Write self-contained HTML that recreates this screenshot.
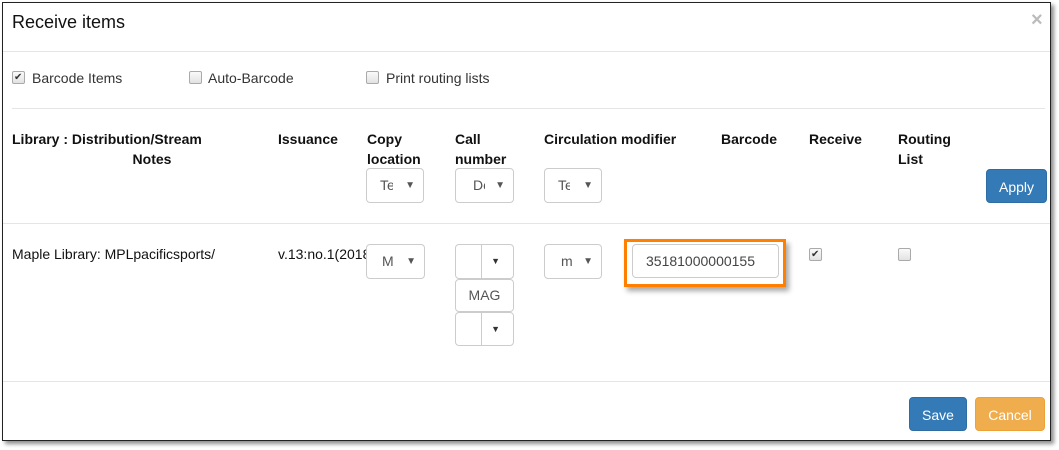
<!DOCTYPE html>
<html><head><style>
*{box-sizing:border-box;margin:0;padding:0}
body{width:1059px;height:450px;background:#fff;font-family:"Liberation Sans",Arial,sans-serif;font-size:14px;color:#333;position:relative;overflow:hidden}
.a{position:absolute}
#frame{left:2px;top:2px;width:1049px;height:439px;border:1px solid #222;box-shadow:3px 3px 4px rgba(0,0,0,.45);background:#fff}
.hr{position:absolute;height:1px;background:#e5e5e5}
.b{font-weight:bold;color:#111;line-height:20px}
.cb{position:absolute;width:13px;height:13px;border:1px solid #aaa;border-radius:2px;background:linear-gradient(#fafafa,#e2e2e2)}
.sel{position:absolute;border:1px solid #ccc;border-radius:4px;height:35px;background:#fff;color:#555;line-height:33px;font-size:14px}
.sel .t{position:absolute;left:13px;overflow:hidden;white-space:nowrap}
.sel .ar{position:absolute;right:8px;top:0;font-size:10px;color:#555}
.btn{position:absolute;border-radius:4px;color:#fff;text-align:center;font-size:14px}
.ck{position:absolute;font-size:10px;color:#333;line-height:10px}
</style></head><body>
<div id="frame" class="a"></div>
<div class="a" style="left:12px;top:12px;font-size:18px;color:#111">Receive items</div>
<div class="a" style="left:1031px;top:9px;font-size:20px;color:#bbb;font-weight:bold">×</div>
<div class="hr" style="left:3px;top:51px;width:1047px"></div>

<div class="cb" style="left:12px;top:71px"></div><div class="ck" style="left:14px;top:73px">✔</div>
<div class="a" style="left:32px;top:70px;color:#333">Barcode Items</div>
<div class="cb" style="left:189px;top:71px"></div>
<div class="a" style="left:208px;top:70px">Auto-Barcode</div>
<div class="cb" style="left:366px;top:71px"></div>
<div class="a" style="left:386px;top:70px">Print routing lists</div>
<div class="hr" style="left:12px;top:108px;width:1033px"></div>

<div class="a b" style="left:12px;top:129px">Library : Distribution/Stream</div>
<div class="a b" style="left:112px;top:149px;width:80px;text-align:center">Notes</div>
<div class="a b" style="left:278px;top:129px">Issuance</div>
<div class="a b" style="left:367px;top:129px">Copy<br>location</div>
<div class="a b" style="left:455px;top:129px">Call<br>number</div>
<div class="a b" style="left:544px;top:129px">Circulation modifier</div>
<div class="a b" style="left:721px;top:129px">Barcode</div>
<div class="a b" style="left:809px;top:129px">Receive</div>
<div class="a b" style="left:898px;top:129px">Routing<br>List</div>

<div class="sel" style="left:366px;top:168px;width:58px"><span class="t" style="width:13px">Te</span><span class="ar">▼</span></div>
<div class="sel" style="left:455px;top:168px;width:59px"><span class="t" style="left:17px;width:12px">De</span><span class="ar">▼</span></div>
<div class="sel" style="left:544px;top:168px;width:58px"><span class="t" style="width:12px">Te</span><span class="ar">▼</span></div>
<div class="btn" style="left:986px;top:169px;width:61px;height:34px;line-height:34px;background:#337ab7;border:1px solid #2e6da4">Apply</div>
<div class="hr" style="left:3px;top:223px;width:1047px"></div>

<div class="a" style="left:12px;top:246px;color:#111">Maple Library: MPLpacificsports/</div>
<div class="a" style="left:278px;top:246px;color:#111;width:88px;overflow:hidden;white-space:nowrap">v.13:no.1(2018</div>
<div class="sel" style="left:366px;top:244px;width:59px"><span class="t" style="left:15px">M</span><span class="ar">▼</span></div>
<div class="sel" style="left:455px;top:244px;width:59px"><div class="a" style="left:25px;top:0;width:1px;height:33px;background:#ccc"></div><span class="ar" style="right:13px;font-size:9px;color:#333">▼</span></div>
<div class="sel" style="left:455px;top:279px;width:59px;text-align:center;line-height:31px;height:33px">MAG</div>
<div class="sel" style="left:455px;top:312px;width:59px;height:34px"><div class="a" style="left:25px;top:0;width:1px;height:32px;background:#ccc"></div><span class="ar" style="right:13px;font-size:9px;color:#333;line-height:32px">▼</span></div>
<div class="sel" style="left:544px;top:244px;width:58px"><span class="t" style="left:16px">m</span><span class="ar">▼</span></div>

<div class="a" style="left:624px;top:239px;width:162px;height:48px;border:3px solid #ff8000;box-shadow:3px 4px 5px rgba(0,0,0,.35);background:#fff"></div>
<div class="sel" style="left:632px;top:244px;width:147px;height:34px;line-height:32px;color:#444"><span class="t" style="left:13px">35181000000155</span></div>

<div class="cb" style="left:809px;top:248px"></div><div class="ck" style="left:811px;top:250px">✔</div>
<div class="cb" style="left:898px;top:248px"></div>

<div class="hr" style="left:3px;top:381px;width:1047px"></div>
<div class="btn" style="left:909px;top:397px;width:58px;height:34px;line-height:34px;background:#337ab7;border:1px solid #2e6da4">Save</div>
<div class="btn" style="left:975px;top:397px;width:70px;height:34px;line-height:34px;background:#f0ad4e;border:1px solid #eea236">Cancel</div>
</body></html>
